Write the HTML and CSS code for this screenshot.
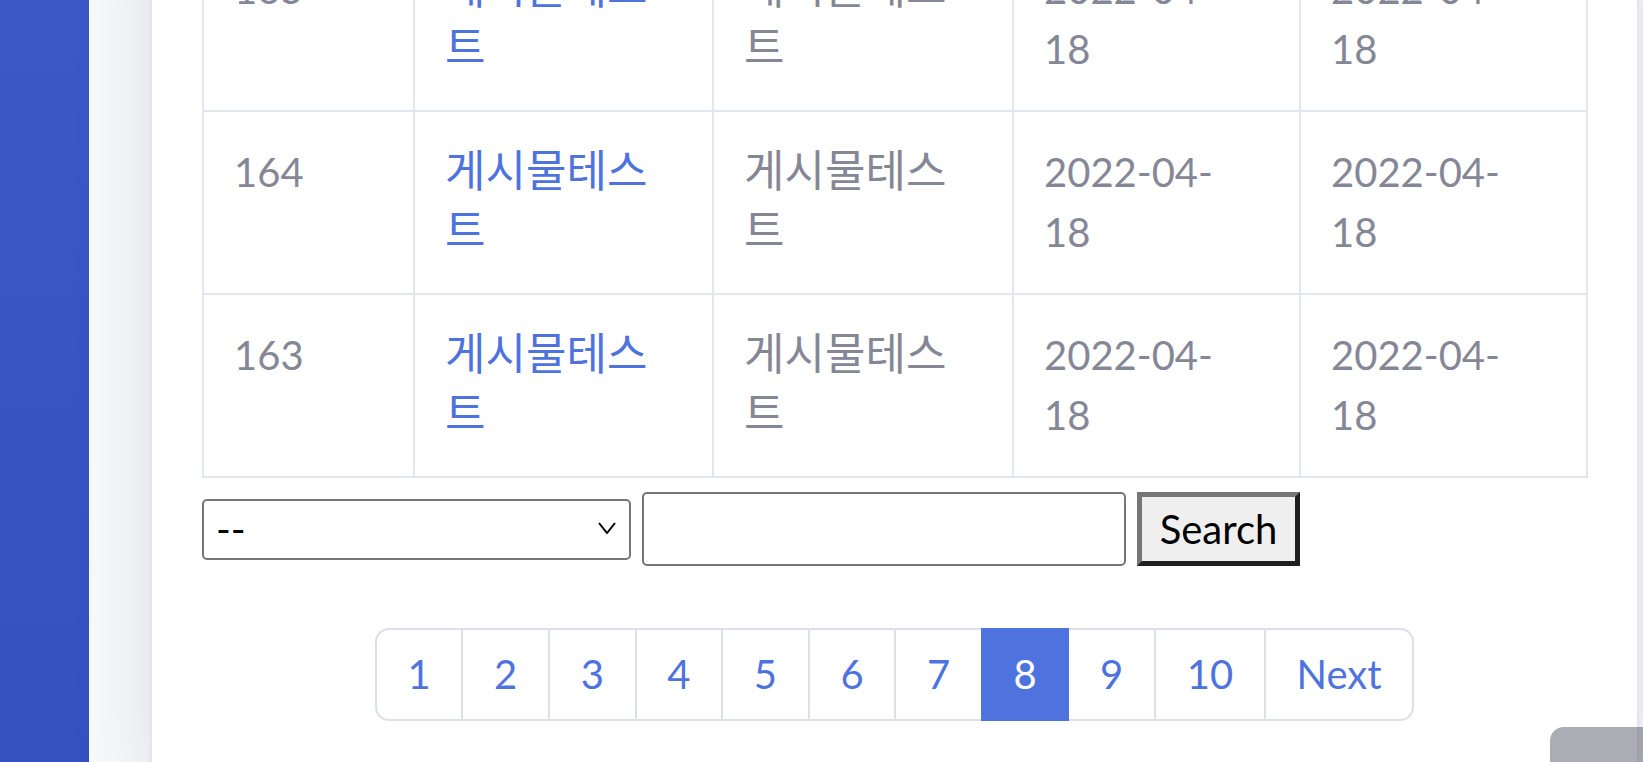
FILE: index.html
```html
<!DOCTYPE html>
<html lang="ko">
<head>
  <meta charset="UTF-8">
  <meta name="viewport" content="width=device-width, initial-scale=1.0">
  <title>게시판</title>
  <link rel="stylesheet" href="styles.css">
</head>
<body>
  <div class="wrapper">
    <aside class="sidebar"></aside>

    <main class="content">
      <div class="card">
        <div class="card-body">
          <table class="board">
            <colgroup>
              <col class="col-no">
              <col class="col-title">
              <col class="col-writer">
              <col class="col-date">
              <col class="col-date">
            </colgroup>
            <tbody>
              <tr>
                <td>165</td>
                <td><a class="ko" href="#">게시물테스트</a></td>
                <td><span class="ko">게시물테스트</span></td>
                <td><span class="date">2022-04-18</span></td>
                <td><span class="date">2022-04-18</span></td>
              </tr>
              <tr>
                <td>164</td>
                <td><a class="ko" href="#">게시물테스트</a></td>
                <td><span class="ko">게시물테스트</span></td>
                <td><span class="date">2022-04-18</span></td>
                <td><span class="date">2022-04-18</span></td>
              </tr>
              <tr>
                <td>163</td>
                <td><a class="ko" href="#">게시물테스트</a></td>
                <td><span class="ko">게시물테스트</span></td>
                <td><span class="date">2022-04-18</span></td>
                <td><span class="date">2022-04-18</span></td>
              </tr>
            </tbody>
          </table>

          <!-- 검색 -->
          <form class="search" onsubmit="return false">
            <div class="select-box">
              <select name="type">
                <option>--</option>
                <option>제목</option>
                <option>작성자</option>
              </select>
              <svg class="chevron" viewBox="0 0 18 12"><polyline points="1,1 9,11 17,1" fill="none" stroke="#000" stroke-width="2"/></svg>
            </div>
            <input type="text" name="keyword">
            <button type="submit">Search</button>
          </form>

          <!-- 페이지 -->
          <ul class="pagination">
            <li class="page-item"><a class="page-link" href="#">1</a></li>
            <li class="page-item"><a class="page-link" href="#">2</a></li>
            <li class="page-item"><a class="page-link" href="#">3</a></li>
            <li class="page-item"><a class="page-link" href="#">4</a></li>
            <li class="page-item"><a class="page-link" href="#">5</a></li>
            <li class="page-item"><a class="page-link" href="#">6</a></li>
            <li class="page-item"><a class="page-link" href="#">7</a></li>
            <li class="page-item active"><a class="page-link" href="#">8</a></li>
            <li class="page-item"><a class="page-link" href="#">9</a></li>
            <li class="page-item"><a class="page-link" href="#">10</a></li>
            <li class="page-item"><a class="page-link" href="#">Next</a></li>
          </ul>
        </div>
      </div>
    </main>
  </div>

  <a class="scroll-top" href="#"></a>
</body>
</html>
```

FILE: styles.css
```css
body {
  margin: 0;
  background: #f8f9fc;
  font-family: Lato, "Noto Sans CJK KR", sans-serif;
  font-size: 40px;
  line-height: 60px;
  color: #858796;
  overflow: hidden;
}

.wrapper {
  display: flex;
  min-height: 100vh;
}

.sidebar {
  width: 89px;
  flex-shrink: 0;
  background: linear-gradient(180deg, #3c58c7 0%, #3550bf 100%);
}

.content {
  flex: 1;
  padding-left: 61px;
}

/* 카드 */
.card {
  width: 1489px;
  box-sizing: border-box;
  margin-top: -75px;
  background: #fff;
  border: 2px solid #e3e6f0;
  box-shadow: 0 4px 70px 0 rgba(58, 59, 69, 0.15);
}

.card-body {
  padding: 0 50px 60px;
}

/* 게시판 테이블 */
.board {
  width: 1385px;
  table-layout: fixed;
  border-collapse: collapse;
}

.col-no { width: 211px; }
.col-title { width: 299px; }
.col-writer { width: 300px; }
.col-date { width: 287px; }

.board td {
  border: 2px solid #e3e6f0;
  padding: 30px 30px 31px;
  vertical-align: top;
}

.board a {
  color: #4e73df;
  text-decoration: none;
}

/* 한글은 조금 크게, 줄 높이는 그대로 */
.ko {
  font-family: "Noto Sans CJK KR", sans-serif;
  font-size: 44px;
  line-height: 50px;
}

.date {
  display: inline-block;
  max-width: 5em;
}

/* 검색 */
.search {
  display: flex;
  align-items: center;
  gap: 11px;
  margin-top: 14px;
}

.select-box {
  position: relative;
  width: 429px;
  height: 61px;
}

.select-box select {
  appearance: none;
  width: 100%;
  height: 100%;
  box-sizing: border-box;
  padding: 0 12px;
  border: 2px solid #767676;
  border-radius: 5px;
  background: #fff;
  font: inherit;
  line-height: normal;
  color: #000;
}

.chevron {
  position: absolute;
  right: 15px;
  top: 23px;
  width: 18px;
  height: 12px;
  pointer-events: none;
}

.search input {
  width: 484px;
  height: 74px;
  box-sizing: border-box;
  border: 2px solid #767676;
  border-radius: 5px;
  font: inherit;
  padding: 0 5px;
}

.search button {
  width: 163px;
  height: 74px;
  box-sizing: border-box;
  padding: 0;
  border: 5px solid;
  border-color: #767676 #1f1f1f #1f1f1f #767676;
  border-radius: 0;
  background: #efefef;
  font: inherit;
  color: #000;
}

/* 페이지네이션 */
.pagination {
  display: flex;
  justify-content: center;
  list-style: none;
  margin: 62px 0 0;
  padding: 0;
}

.page-link {
  display: block;
  padding: 20px 30.7px;
  line-height: 49px;
  margin-left: -2px;
  border: 2px solid #dddfeb;
  background: #fff;
  color: #4e73df;
  text-decoration: none;
}

.page-item:first-child .page-link {
  margin-left: 0;
  border-radius: 14px 0 0 14px;
}

.page-item:last-child .page-link {
  border-radius: 0 14px 14px 0;
}

.page-item.active .page-link {
  position: relative;
  z-index: 1;
  background: #4e73df;
  border-color: #4e73df;
  color: #fff;
}

.scroll-top {
  position: fixed;
  left: 1550px;
  top: 727px;
  width: 110px;
  height: 110px;
  border-radius: 14px;
  background: rgba(90, 92, 105, 0.5);
}
```
